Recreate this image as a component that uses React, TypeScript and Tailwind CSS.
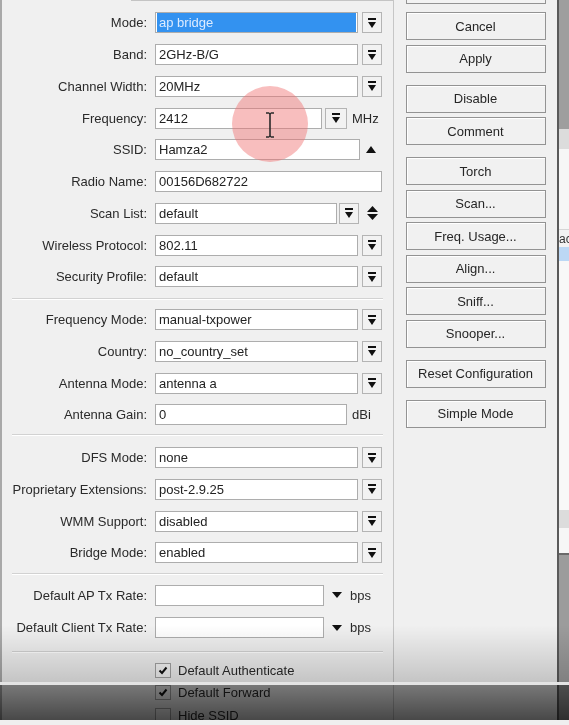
import type { ReactNode } from 'react'

// Winbox-style wireless interface dialog, captured from a video frame.

function DropIcon() {
  return (
    <svg width="8" height="10" viewBox="0 0 8 10" className="fill-[#111]">
      <rect x="0" y="0" width="8" height="2" />
      <polygon points="0,4 8,4 4,10" />
    </svg>
  )
}

function DropBtn({ w = 'w-[20px]' }: { w?: string }) {
  return (
    <div className={`h-[21px] ${w} shrink-0 border border-[#b4b4b4] bg-[#f2f2f2] flex items-center justify-center`}>
      <DropIcon />
    </div>
  )
}

function Field({ value = '', w, selected }: { value?: string; w: string; selected?: boolean }) {
  return (
    <div className={`h-[21px] ${w} shrink-0 border border-[#adadad] bg-white flex items-center px-[1px]`}>
      <div className={`h-full flex-1 flex items-center pl-[2px] ${selected ? 'bg-[#3392f0] text-[#dcebff]' : 'text-[#222]'}`}>
        {value}
      </div>
    </div>
  )
}

function Row({ label, children, h = 'h-[31.75px]' }: { label: string; children?: ReactNode; h?: string }) {
  return (
    <div className={`flex items-center ${h}`}>
      <div className="w-[145px] text-right text-[#2a2a2a] whitespace-nowrap">{label}</div>
      <div className="ml-[8px] flex items-center">{children}</div>
    </div>
  )
}

function Combo({ value, selected }: { value: string; selected?: boolean }) {
  return (
    <>
      <Field value={value} w="w-[203px]" selected={selected} />
      <div className="ml-[4px]"><DropBtn /></div>
    </>
  )
}

function Sep() {
  return <div className="mx-[10px] h-[2px] border-t border-[#d2d2d2] border-b border-b-white" />
}

function Check({ label, checked }: { label: string; checked?: boolean }) {
  return (
    <div className="flex items-center h-[22.5px] pl-[153px]">
      <div className="w-[16px] h-[15px] border border-[#a3a3a3] bg-[#f6f6f6] flex items-center justify-center">
        {checked && (
          <svg width="10" height="9" viewBox="0 0 10 9">
            <path d="M1.5 4.5 L4 7 L8.5 1.5" stroke="#111" strokeWidth="2" fill="none" />
          </svg>
        )}
      </div>
      <span className="ml-[7px] text-[#2a2a2a]">{label}</span>
    </div>
  )
}

function Btn({ label }: { label: string }) {
  return (
    <div className="h-[28px] w-[140px] border border-[#939393] bg-[#f1f1f1] shadow-[inset_1px_1px_0_#fff] flex items-center justify-center text-[#262626]">
      {label}
    </div>
  )
}

export default function App() {
  return (
    <div className="relative w-[569px] h-[725px] overflow-hidden bg-[#f0f0f0] text-[13px] leading-none font-['Liberation_Sans',Arial,sans-serif] blur-[0.4px]">
      <div className="flex h-full">
        {/* form panel */}
        <div className="w-[394px] h-full shrink-0 border-l-2 border-l-[#a9a9a9] border-r border-r-[#c6c6c6]">
          <div className="h-[1px] ml-[129px] bg-[#c4c4c4]" />
          <div className="pt-[6px]">
            <Row label="Mode:"><Combo value="ap bridge" selected /></Row>
            <Row label="Band:"><Combo value="2GHz-B/G" /></Row>
            <Row label="Channel Width:"><Combo value="20MHz" /></Row>
            <Row label="Frequency:">
              <Field value="2412" w="w-[167px]" />
              <div className="ml-[3px]"><DropBtn w="w-[22px]" /></div>
              <span className="ml-[5px] text-[#2a2a2a]">MHz</span>
            </Row>
            <Row label="SSID:">
              <Field value="Hamza2" w="w-[205px]" />
              <svg width="10" height="7" viewBox="0 0 10 7" className="ml-[6px] fill-[#111]">
                <polygon points="0,7 10,7 5,0" />
              </svg>
            </Row>
            <Row label="Radio Name:"><Field value="00156D682722" w="w-[227px]" /></Row>
            <Row label="Scan List:">
              <Field value="default" w="w-[182px]" />
              <div className="ml-[2px]"><DropBtn /></div>
              <svg width="11" height="14" viewBox="0 0 11 14" className="ml-[8px] fill-[#111]">
                <polygon points="0,6 11,6 5.5,0" />
                <polygon points="0,8 11,8 5.5,14" />
              </svg>
            </Row>
            <Row label="Wireless Protocol:"><Combo value="802.11" /></Row>
            <Row label="Security Profile:"><Combo value="default" /></Row>
          </div>

          <div className="mt-[5px]"><Sep /></div>
          <div className="mt-[4px]">
            <Row label="Frequency Mode:"><Combo value="manual-txpower" /></Row>
            <Row label="Country:"><Combo value="no_country_set" /></Row>
            <Row label="Antenna Mode:"><Combo value="antenna a" /></Row>
            <Row label="Antenna Gain:">
              <Field value="0" w="w-[192px]" />
              <span className="ml-[5px] text-[#2a2a2a]">dBi</span>
            </Row>
          </div>

          <div className="mt-[3px]"><Sep /></div>
          <div className="mt-[6px]">
            <Row label="DFS Mode:"><Combo value="none" /></Row>
            <Row label="Proprietary Extensions:"><Combo value="post-2.9.25" /></Row>
            <Row label="WMM Support:"><Combo value="disabled" /></Row>
            <Row label="Bridge Mode:"><Combo value="enabled" /></Row>
          </div>

          <div className="mt-[4px]"><Sep /></div>
          <div className="mt-[4px]">
            {['Default AP Tx Rate:', 'Default Client Tx Rate:'].map(l => (
              <Row key={l} label={l} h="h-[32.5px]">
                <Field w="w-[169px]" />
                <svg width="10" height="6" viewBox="0 0 10 6" className="ml-[8px] fill-[#111]">
                  <polygon points="0,0 10,0 5,6" />
                </svg>
                <span className="ml-[8px] text-[#2a2a2a]">bps</span>
              </Row>
            ))}
          </div>

          <div className="mt-[7px]"><Sep /></div>
          <div className="mt-[6px]">
            <Check label="Default Authenticate" checked />
            <Check label="Default Forward" checked />
            <Check label="Hide SSID" />
          </div>
        </div>

        {/* button column */}
        <div className="w-[163px] shrink-0 flex flex-col items-center">
          <div className="h-[4px] w-[140px] border-x border-b border-[#939393] bg-[#f3f3f3]" />
          <div className="mt-[8px] flex flex-col gap-[4.5px]">
            <Btn label="Cancel" />
            <Btn label="Apply" />
          </div>
          <div className="mt-[12px] flex flex-col gap-[4.5px]">
            <Btn label="Disable" />
            <Btn label="Comment" />
          </div>
          <div className="mt-[12px] flex flex-col gap-[4.5px]">
            <Btn label="Torch" />
            <Btn label="Scan..." />
            <Btn label="Freq. Usage..." />
            <Btn label="Align..." />
            <Btn label="Sniff..." />
            <Btn label="Snooper..." />
          </div>
          <div className="mt-[12px]"><Btn label="Reset Configuration" /></div>
          <div className="mt-[12px]"><Btn label="Simple Mode" /></div>
        </div>

        {/* list window behind, cut off at the edge */}
        <div className="w-[2px] shrink-0 bg-[#5a5a5a]" />
        <div className="flex-1 flex flex-col overflow-hidden">
          <div className="h-[129px] bg-[#9e9e9e]" />
          <div className="h-[20px] bg-[#dcdcdc]" />
          <div className="h-[80px] bg-[#f6f6f6]" />
          <div className="h-[18px] bg-[#f3f3f3] border-t border-[#d6d6d6] flex items-center text-[12px] text-[#333] whitespace-nowrap">ac</div>
          <div className="h-[14px] bg-[#bcd8f5]" />
          <div className="h-[249px] bg-[#f8f8f8]" />
          <div className="h-[18px] bg-[#dcdcdc]" />
          <div className="h-[25px] bg-[#f6f6f6]" />
          <div className="h-[2px] bg-[#6a6a6a]" />
          <div className="flex-1 bg-[#9c9c9c]" />
        </div>
      </div>

      {/* cursor highlight */}
      <div className="absolute left-[232px] top-[86px] w-[76px] h-[76px] rounded-full bg-[#f06e6e]/45" />
      <svg width="10" height="26" viewBox="0 0 10 26" className="absolute left-[265px] top-[112px]">
        <path d="M1 1 H4 M6 1 H9 M5 2 V24 M1 25 H4 M6 25 H9 M4 1.5 H6 M4 24.5 H6" stroke="#2a2a2a" strokeWidth="1.6" fill="none" />
      </svg>

      {/* video player overlay */}
      <div className="absolute inset-x-0 top-[625px] h-[57px] bg-linear-to-b from-black/0 to-black/[0.18]" />
      <div className="absolute inset-x-0 top-[682px] h-[3px] bg-[#e4e4e4]" />
      <div className="absolute inset-x-0 top-[685px] h-[35px] bg-linear-to-b from-black/50 to-black/70" />
      <div className="absolute inset-x-0 top-[720px] h-[5px] bg-[#efefef]" />
    </div>
  )
}
